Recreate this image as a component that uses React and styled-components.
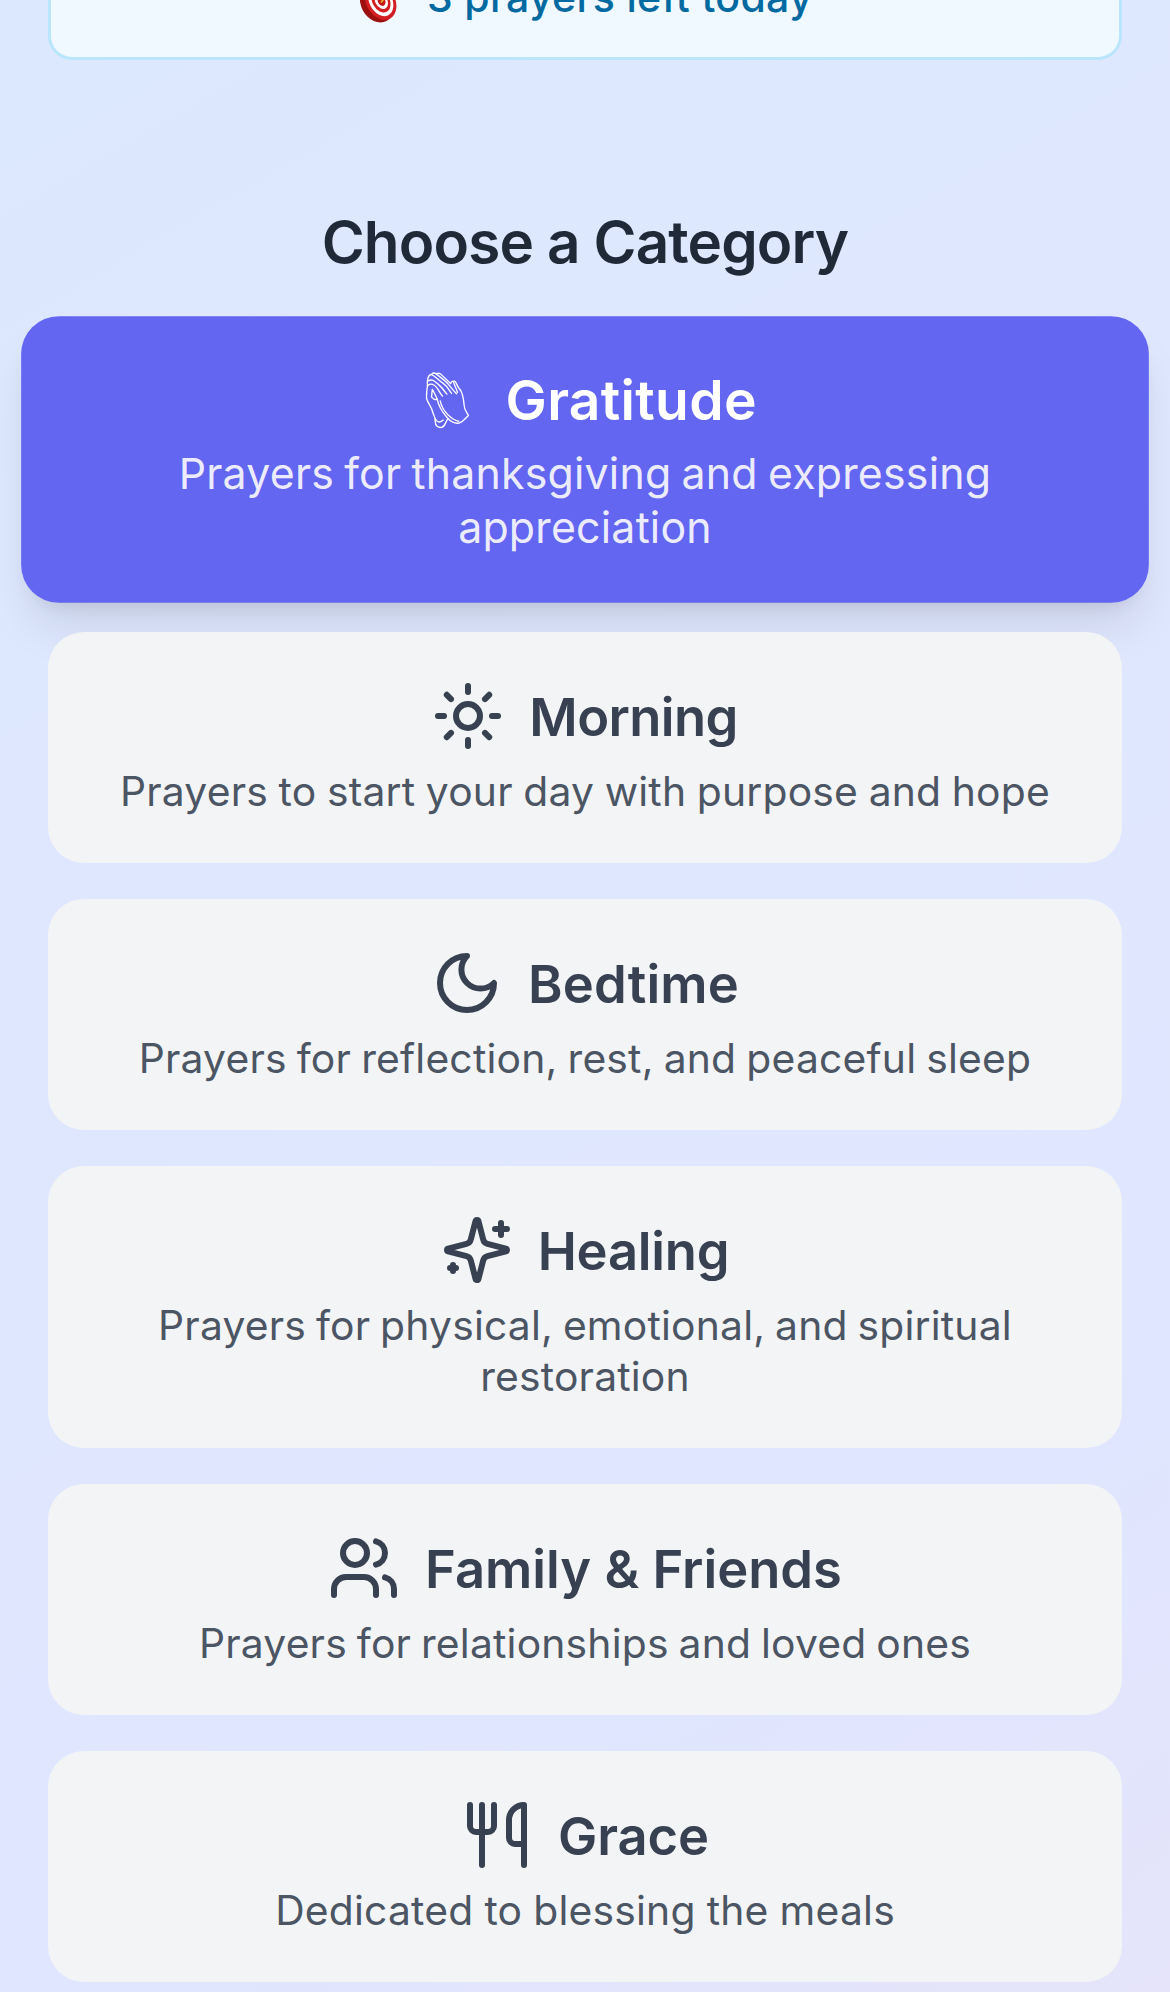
import React from "react";
import styled, { createGlobalStyle, css } from "styled-components";
import { Sun, Users, Utensils } from "lucide-react";

const GlobalStyle = createGlobalStyle`
  *, *::before, *::after { box-sizing: border-box; }
  body { margin: 0; }
`;

const Page = styled.main`
  width: 1170px;
  height: 1992px;
  padding: 0 48px;
  overflow: hidden;
  display: flex;
  flex-direction: column;
  background: linear-gradient(150deg, #dce8fe 0%, #dfe7ff 45%, #e0e6ff 78%, #e5e4fa 100%);
  font-family: Inter, "Liberation Sans", sans-serif;
  text-align: center;
`;

const Quota = styled.div`
  flex: none;
  height: 126px;
  margin-top: -66px;
  display: flex;
  align-items: center;
  justify-content: center;
  gap: 28px;
  border: 3px solid #bae6fd;
  border-radius: 24px;
  background: #f0f9ff;
  color: #0369a1;
  font-size: 41px;
  font-weight: 500;
  line-height: 48px;
  letter-spacing: 0.33px;
`;

const Heading = styled.h2`
  flex: none;
  margin: 146px 0 45px;
  color: #1f2937;
  font-size: 58.4px;
  font-weight: 600;
  line-height: 72px;
  letter-spacing: -0.85px;
`;

const List = styled.div`
  display: flex;
  flex-direction: column;
  gap: 36px;
`;

const Card = styled.button`
  position: relative;
  flex: none;
  display: flex;
  flex-direction: column;
  align-items: center;
  gap: 12px;
  margin: 0;
  padding: 48px;
  border: 0;
  border-radius: 36px;
  background: #f3f4f6;
  color: #374151;
  font-family: inherit;
  ${(p) =>
    p.$active &&
    css`
      background: #6366f1;
      color: #fff;
      transform: scale(1.05);
      box-shadow: 0 30px 45px -9px rgba(0, 0, 0, 0.1), 0 12px 18px -12px rgba(0, 0, 0, 0.1);
    `}
`;

const TitleRow = styled.div`
  display: flex;
  align-items: center;
  justify-content: center;
  gap: 25px;
  height: ${(p) => (p.$active ? 63 : 72)}px;
`;

const Title = styled.span`
  padding-top: 2px;
  font-size: 52.5px;
  font-weight: 600;
  line-height: 63px;
  letter-spacing: ${(p) => p.$tracking}px;
`;

const Description = styled.span`
  position: relative;
  padding-top: 2px;
  margin-bottom: -2px;
  max-width: 960px;
  color: ${(p) => (p.$active ? "rgba(255,255,255,0.9)" : "#4b5563")};
  font-size: 40.8px;
  font-weight: 400;
  line-height: 51px;
  letter-spacing: 0.2px;
  word-spacing: ${(p) => p.$wordGap}px;
`;

const TargetIcon = () => (
  <svg width="42" height="52" viewBox="0 0 42 52">
    <ellipse cx="20" cy="32" rx="16" ry="20.5" transform="rotate(-28 20 32)" fill="#9c1010" />
    <ellipse cx="23.5" cy="30" rx="14.5" ry="20" transform="rotate(-28 23.5 30)" fill="#d31f22" />
    <ellipse cx="23.8" cy="30" rx="11.4" ry="16" transform="rotate(-28 23.8 30)" fill="#fff" />
    <ellipse cx="24" cy="30" rx="8.6" ry="12.2" transform="rotate(-28 24 30)" fill="#d31f22" />
    <ellipse cx="24.3" cy="30" rx="6" ry="8.6" transform="rotate(-28 24.3 30)" fill="#fff" />
    <ellipse cx="24.5" cy="30" rx="3.6" ry="5.2" transform="rotate(-28 24.5 30)" fill="#c81518" />
    <path d="M24.5 31 L31 22" stroke="#e0a526" strokeWidth="2" strokeLinecap="round" />
  </svg>
);

const Outline = ({ size, children }) => (
  <svg
    width={size}
    height={size}
    viewBox="0 0 24 24"
    fill="none"
    stroke="currentColor"
    strokeWidth="2"
    strokeLinecap="round"
    strokeLinejoin="round"
  >
    {children}
  </svg>
);

const Crescent = ({ size }) => (
  <Outline size={size}>
    <path d="M12 3a6 6 0 0 0 9 9 9 9 0 1 1-9-9Z" />
  </Outline>
);

const Sparkle = ({ size }) => (
  <Outline size={size}>
    <path d="M9.937 15.5A2 2 0 0 0 8.5 14.063l-6.135-1.582a.5.5 0 0 1 0-.962L8.5 9.936A2 2 0 0 0 9.937 8.5l1.582-6.135a.5.5 0 0 1 .963 0L14.063 8.5A2 2 0 0 0 15.5 9.937l6.135 1.581a.5.5 0 0 1 0 .964L15.5 14.063a2 2 0 0 0-1.437 1.437l-1.582 6.135a.5.5 0 0 1-.963 0z" />
    <path d="M20 3v4" />
    <path d="M22 5h-4" />
    <path d="M4 17v2" />
    <path d="M5 18H3" />
  </Outline>
);

const PrayingHands = () => (
  <svg
    width="63"
    height="63"
    viewBox="42 49 198 199"
    fill="none"
    stroke="currentColor"
    strokeWidth="4"
    strokeLinecap="round"
    strokeLinejoin="round"
  >
    <path d="M86 108 C83 90 88 72 98 73 C101 67 107 67 112 71 C118 67 124 70 128 74 L155 100" />
    <path d="M86 104 C84 118 82 130 83 145 C88 162 98 170 101 185 C104 196 110 200 109 214 C109 227 118 234 128 232 C138 230 139 218 146 208" />
    <path d="M109 206 C113 217 124 219 133 210" />
    <path d="M100 118 L98 141 C104 148 110 150 115 147 C110 138 107 126 100 118" />
    <path d="M115 147 C118 166 127 182 145 203 C155 214 169 221 181 219 C194 215 200 204 209 196 C204 186 197 182 196 166 C194 150 194 136 185 120" />
    <path d="M124 152 C127 168 137 184 148 195 C158 205 169 211 180 214" />
    <path d="M87 106 C96 98 106 103 114 113 C121 122 124 130 131 138" />
    <path d="M88 92 C100 84 110 96 120 104 C131 113 135 122 144 132" />
    <path d="M98 73 C108 77 118 90 131 98 C145 107 150 118 158 130" />
    <path d="M112 71 C125 82 140 92 150 104 C158 114 163 121 173 131" />
    <path d="M155 100 C158 94 161 91 164 95 C166 105 172 113 176 127 M166 92 C172 92 172 106 185 120" />
  </svg>
);

const categories = [
  {
    title: "Gratitude",
    icon: PrayingHands,
    description: "Prayers for thanksgiving and expressing appreciation",
    active: true,
    tracking: 0.3,
    wordGap: -2,
  },
  {
    title: "Morning",
    icon: Sun,
    description: "Prayers to start your day with purpose and hope",
    tracking: -0.6,
    wordGap: -1.1,
  },
  {
    title: "Bedtime",
    icon: Crescent,
    description: "Prayers for reflection, rest, and peaceful sleep",
    tracking: 0.15,
    wordGap: -1.6,
  },
  {
    title: "Healing",
    icon: Sparkle,
    description: "Prayers for physical, emotional, and spiritual restoration",
    tracking: -0.25,
    wordGap: -1.8,
  },
  {
    title: "Family & Friends",
    icon: Users,
    description: "Prayers for relationships and loved ones",
    tracking: 0,
    wordGap: -1.8,
  },
  {
    title: "Grace",
    icon: Utensils,
    description: "Dedicated to blessing the meals",
    tracking: -0.1,
    wordGap: -0.6,
  },
];

export default function App() {
  return (
    <>
      <GlobalStyle />
      <Page>
        <Quota>
          <TargetIcon />
          <span>3 prayers left today</span>
        </Quota>
        <Heading>Choose a Category</Heading>
        <List>
          {categories.map(({ title, icon: Icon, description, active, tracking, wordGap }) => (
            <Card key={title} $active={active}>
              <TitleRow $active={active}>
                <Icon size={72} />
                <Title $tracking={tracking}>{title}</Title>
              </TitleRow>
              <Description $active={active} $wordGap={wordGap}>
                {description}
              </Description>
            </Card>
          ))}
        </List>
      </Page>
    </>
  );
}
